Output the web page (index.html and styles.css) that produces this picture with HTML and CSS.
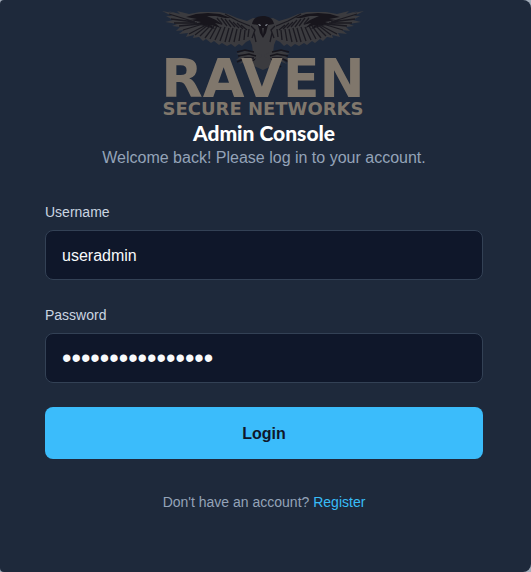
FILE: index.html
```html
<!doctype html>
<html lang="en">
  <head>
    <meta charset="utf-8">
    <meta name="viewport" content="width=device-width, initial-scale=1">
    <title>Admin Console</title>
    <link rel="stylesheet" href="styles.css">
  </head>
  <body>
    <main class="login-card">
      <header class="login-header">
        <svg class="logo" viewBox="1 0 208 108" role="img" aria-label="Raven Secure Networks">
          <defs>
            <!-- left half of the bird, mirrored for the right -->
            <g id="wing">
              <path class="feather" d="M3 2 L14 4 L9 2 L21 5 L18 2 L30 5 L41 3 L50 3 L60 3 L69 5 L78 9 L88 12 L94 9 L104 10 V56 L96 52 L94 44 L93 36 L91 31 L87 33 L83 37 L80 35 L76 38 L72 35 L68 37 L63 34 L60 36 L55 32 L52 34 L47 30 L44 32 L40 28 L34 29 L35 26 L27 28 L29 24 L20 25 L25 21 L17 22 L21 18 L13 17 L18 15 L6 13 L14 11 L7 7 L13 7 Z"/>
              <path class="shade" d="M27 8 L37 5 L49 4 L61 5 L72 9 L66 9 L57 7 L48 7 L57 11 L64 16 L56 14 L62 19 L52 16 L56 20 L46 17 L36 15 L42 13 L31 11 L38 10 Z"/>
              <g class="barb">
                <path d="M10 5 L33 12 M12 10 L36 13 M15 14 L38 14 M20 17 L41 15 M24 21 L44 15"/>
                <path d="M30 25 L47 16 M36 26 L49 16 M41 27 L52 16 M46 29 L55 17 M51 30 L58 17 M56 31 L62 18 M61 32 L66 18"/>
                <path d="M66 33 L70 19 M70 33 L74 19 M75 33 L78 20 M80 32 L82 20 M85 31 L86 21 M89 28 L90 20"/>
                <path d="M58 9 L63 15 M62 9 L68 17 M66 10 L72 18 M70 11 L76 18 M74 13 L80 19 M78 14 L84 20 M82 16 L88 21"/>
                <path d="M66 5 L79 12 L91 17 M92 17 L96 21 L93 29 M95 24 L97 33"/>
              </g>
              <path class="foot" d="M96 43 L85 42 L77 45 L83 46 L77 51 L85 50 L80 55 L88 52 L86 58 L97 53 L103 46"/>
              <path class="claw" d="M95 43 L86 41 L78 43 M97 47 L90 45 L79 47 M95 49 L86 49 L78 53 M97 50 L91 53 L86 58"/>
            </g>
          </defs>
          <use href="#wing"/>
          <use href="#wing" transform="matrix(-1 0 0 1 208 0)"/>
          <path class="shade" d="M93 15 C94 9 99 7 104 7 C109 7 114 9 115 15 L109 16 L107 24 L104 29 L101 24 L99 16 Z"/>
          <path class="feather" d="M103 19 L104 26 L105 19 Z M97 49 L111 49 L115 56 L104 61 L93 56 Z"/>
          <path class="eye" d="M99 15 L102 16 L101 17 Z M109 15 L106 16 L107 17 Z"/>
          <text class="logo-name" x="104" y="88">RAVEN</text>
          <text class="logo-tagline" x="104" y="106">SECURE NETWORKS</text>
        </svg>
        <h1 class="title">Admin Console</h1>
        <p class="subtitle">Welcome back! Please log in to your account.</p>
      </header>

      <form class="login-form">
        <div class="form-group">
          <label for="username">Username</label>
          <input type="text" id="username" name="username" value="useradmin">
        </div>
        <div class="form-group">
          <label for="password">Password</label>
          <input type="password" id="password" name="password" value="ravenadmin123456">
        </div>
        <button type="submit" class="login-button">Login</button>
      </form>

      <p class="register">Don't have an account? <a href="#">Register</a></p>
    </main>
  </body>
</html>
```
FILE: styles.css
```css
* {
  box-sizing: border-box;
}
body {
  margin: 0;
  background: #a3adba;
  font-family: "Liberation Sans", Arial, sans-serif;
  font-size: 16px;
  line-height: 24px;
}
.login-card {
  min-height: 100vh;
  padding: 9px 48px 48px 45px;
  background: #1e293b;
  border-radius: 4px 8px 8px 4px;
}
.login-header {
  margin-bottom: 31px;
  text-align: center;
}

/* logo */
.logo {
  display: block;
  width: 208px;
  height: 108px;
  margin: 0 auto 4px;
  overflow: visible;
}
.feather {
  fill: #3b3b3f;
}
.shade {
  fill: #17151c;
}
.barb {
  fill: none;
  stroke: #1b1a21;
  stroke-width: 1.3;
}
.foot {
  fill: #3b3b3f;
}
.claw {
  fill: none;
  stroke: #17151c;
  stroke-width: 1.5;
}
.eye {
  fill: #b4bcc4;
}
.logo-name,
.logo-tagline {
  fill: #80776c;
  font-family: "DejaVu Sans", sans-serif;
  font-weight: bold;
  text-anchor: middle;
}
.logo-name {
  font-size: 54px;
}
.logo-tagline {
  font-size: 18px;
}

.title {
  margin: 0;
  color: #fff;
  font-family: Lato, sans-serif;
  font-size: 21px;
  font-weight: 900;
  line-height: 24px;
}
.subtitle {
  margin: 0;
  color: #94a3b8;
  line-height: 25px;
}

/* form */
.login-form {
  display: flex;
  flex-direction: column;
  gap: 24px;
}
.form-group {
  display: flex;
  flex-direction: column;
  gap: 6px;
}
.form-group label {
  color: #cbd5e1;
  font-size: 14px;
  line-height: 23px;
}
.form-group input {
  width: 100%;
  height: 50px;
  padding: 1px 16px 0;
  background: #0f172a;
  border: 1px solid #334155;
  border-radius: 8px;
  color: #f8fafc;
  font: inherit;
}
.form-group input[type="password"] {
  font-size: 27px;
}
.login-button {
  height: 52px;
  padding: 1px 0 0;
  background: #3bbcfb;
  border: none;
  border-radius: 8px;
  color: #0f172a;
  font: inherit;
  font-weight: bold;
  cursor: pointer;
}
.register {
  margin: 32px 0 0;
  color: #94a3b8;
  font-size: 14px;
  line-height: 23px;
  text-align: center;
}
.register a {
  color: #38bdf8;
  text-decoration: none;
}
```
